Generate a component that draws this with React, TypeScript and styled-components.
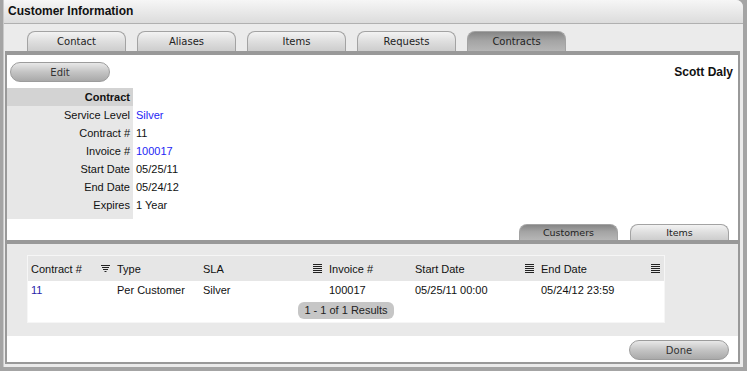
import React from "react";
import styled, { createGlobalStyle } from "styled-components";

const GlobalStyle = createGlobalStyle`
  html, body {
    margin: 0;
    padding: 0;
    background: #a4a4a4;
    font-family: "Liberation Sans", Arial, sans-serif;
    font-size: 11px;
    color: #111;
  }
`;

const Window = styled.div`
  margin: 0 4px 0 3px;
  height: 367px;
  background: #ebebeb;
  border-top-right-radius: 7px;
  border-left: 1px solid #c9c9c9;
  box-sizing: border-box;
  display: flex;
  flex-direction: column;
  overflow: hidden;
`;

const TitleBar = styled.div`
  height: 24px;
  box-sizing: border-box;
  padding-left: 4px;
  line-height: 23px;
  font-weight: bold;
  font-size: 12px;
  color: #111;
  background: linear-gradient(to bottom, #f6f6f6, #dcdcdc);
  border-bottom: 1px solid #b0b0b0;
`;

const TabRow = styled.div`
  display: flex;
  gap: 11px;
  height: 27px;
  box-sizing: border-box;
  padding: 7px 0 0 23px;
`;

const Tab = styled.div<{ $active?: boolean; $small?: boolean }>`
  width: 99px;
  height: ${(p) => (p.$small ? "16px" : "20px")};
  box-sizing: border-box;
  border: 1px solid #a3a3a3;
  border-bottom: none;
  border-radius: 8px 8px 0 0;
  text-align: center;
  font-family: "DejaVu Sans", Verdana, sans-serif;
  font-size: ${(p) => (p.$small ? "9.5px" : "10px")};
  line-height: ${(p) => (p.$small ? "16px" : "19px")};
  color: #222;
  background: ${(p) =>
    p.$active
      ? "linear-gradient(to bottom, #868686, #a4a4a4 45%, #b6b6b6)"
      : "linear-gradient(to bottom, #f3f3f3, #dedede 50%, #cdcdcd)"};
`;

const Panel = styled.div`
  flex: 1;
  margin: 0 3px 3px 1px;
  background: #fff;
  border: 2px solid #999;
  border-top-width: 4px;
  display: flex;
  flex-direction: column;
`;

const TopBar = styled.div`
  display: flex;
  justify-content: space-between;
  align-items: center;
  padding: 7px 5px 0 3px;
`;

const PillButton = styled.button`
  width: 100px;
  height: 20px;
  padding: 0;
  border: 1px solid #9c9c9c;
  border-radius: 10px;
  background: linear-gradient(to bottom, #e8e8e8, #c4c4c4 50%, #a9a9a9);
  font-family: "DejaVu Sans", Verdana, sans-serif;
  font-size: 10px;
  color: #333;
`;

const Owner = styled.div`
  font-weight: bold;
  font-size: 12px;
`;

const DetailGrid = styled.div`
  display: grid;
  grid-template-columns: 126px 1fr;
  margin-top: 6px;
`;

const Label = styled.div<{ $head?: boolean; $spacer?: boolean }>`
  height: ${(p) => (p.$spacer ? "5px" : "18px")};
  line-height: 18px;
  text-align: right;
  padding-right: 3px;
  background: ${(p) => (p.$head ? "#d3d3d3" : "#e7e7e7")};
  font-weight: ${(p) => (p.$head ? "bold" : "normal")};
`;

const Value = styled.div<{ $link?: boolean }>`
  line-height: 18px;
  padding-left: 3px;
  color: ${(p) => (p.$link ? "#1e1ef5" : "#111")};
`;

const SubTabRow = styled.div`
  display: flex;
  justify-content: flex-end;
  gap: 12px;
  padding-right: 9px;
  margin-top: 5px;
`;

const LowerSection = styled.div`
  background: #e9e9e9;
  border-top: 4px solid #999;
  padding: 11px 0 13px 20px;
`;

const ResultGrid = styled.div`
  width: 638px;
  border: 1px solid #f6f6f6;
  box-sizing: border-box;
  background: #fff;
`;

const COLS = "86px 86px 126px 86px 126px 126px";

const HeadRow = styled.div`
  display: grid;
  grid-template-columns: ${COLS};
  height: 25px;
  background: #e6e6e6;
`;

const HeadCell = styled.div`
  display: flex;
  align-items: center;
  justify-content: space-between;
  padding: 0 4px 0 3px;
`;

const DataRow = styled.div`
  display: grid;
  grid-template-columns: ${COLS};
  height: 19px;
  line-height: 19px;
`;

const DataCell = styled.div<{ $link?: boolean }>`
  padding-left: 3px;
  color: ${(p) => (p.$link ? "#2a1fa8" : "#111")};
`;

const PagerRow = styled.div`
  display: flex;
  justify-content: center;
  padding: 2px 0 3px;
`;

const Pager = styled.div`
  width: 96px;
  height: 17px;
  line-height: 17px;
  border-radius: 6px;
  background: #c6c6c6;
  text-align: center;
  color: #222;
`;

const Footer = styled.div`
  flex: 1;
  display: flex;
  justify-content: flex-end;
  align-items: flex-start;
  padding: 4px 9px 0 0;
`;

const FilterIcon = () => (
  <svg width="9" height="8" viewBox="0 0 9 8">
    <rect x="0" y="0" width="9" height="1" fill="#222" />
    <rect x="1" y="2" width="7" height="1" fill="#222" />
    <rect x="2" y="4" width="5" height="1" fill="#222" />
    <rect x="3.5" y="6" width="2" height="1" fill="#222" />
  </svg>
);

const MenuIcon = () => (
  <svg width="9" height="9" viewBox="0 0 9 9">
    {[0, 2, 4, 6, 8].map((y) => (
      <rect key={y} x="0" y={y} width="9" height="1" fill="#222" />
    ))}
  </svg>
);

const details: { label: string; value: string; link?: boolean }[] = [
  { label: "Service Level", value: "Silver", link: true },
  { label: "Contract #", value: "11" },
  { label: "Invoice #", value: "100017", link: true },
  { label: "Start Date", value: "05/25/11" },
  { label: "End Date", value: "05/24/12" },
  { label: "Expires", value: "1 Year" },
];

const columns: { title: string; icon?: "filter" | "menu" }[] = [
  { title: "Contract #", icon: "filter" },
  { title: "Type" },
  { title: "SLA", icon: "menu" },
  { title: "Invoice #" },
  { title: "Start Date", icon: "menu" },
  { title: "End Date", icon: "menu" },
];

const row = ["11", "Per Customer", "Silver", "100017", "05/25/11 00:00", "05/24/12 23:59"];

export default function App() {
  return (
    <>
      <GlobalStyle />
      <Window>
        <TitleBar>Customer Information</TitleBar>
        <TabRow>
          {["Contact", "Aliases", "Items", "Requests", "Contracts"].map((t) => (
            <Tab key={t} $active={t === "Contracts"}>
              {t}
            </Tab>
          ))}
        </TabRow>
        <Panel>
          <TopBar>
            <PillButton>Edit</PillButton>
            <Owner>Scott Daly</Owner>
          </TopBar>
          <DetailGrid>
            <Label $head>Contract</Label>
            <Value />
            {details.map((d) => (
              <React.Fragment key={d.label}>
                <Label>{d.label}</Label>
                <Value $link={d.link}>{d.value}</Value>
              </React.Fragment>
            ))}
            <Label $spacer />
            <Value />
          </DetailGrid>
          <SubTabRow>
            <Tab $small $active>
              Customers
            </Tab>
            <Tab $small>Items</Tab>
          </SubTabRow>
          <LowerSection>
            <ResultGrid>
              <HeadRow>
                {columns.map((c) => (
                  <HeadCell key={c.title}>
                    <span>{c.title}</span>
                    {c.icon === "filter" && <FilterIcon />}
                    {c.icon === "menu" && <MenuIcon />}
                  </HeadCell>
                ))}
              </HeadRow>
              <DataRow>
                {row.map((v, i) => (
                  <DataCell key={i} $link={i === 0}>
                    {v}
                  </DataCell>
                ))}
              </DataRow>
              <PagerRow>
                <Pager>1 - 1 of 1 Results</Pager>
              </PagerRow>
            </ResultGrid>
          </LowerSection>
          <Footer>
            <PillButton>Done</PillButton>
          </Footer>
        </Panel>
      </Window>
    </>
  );
}
